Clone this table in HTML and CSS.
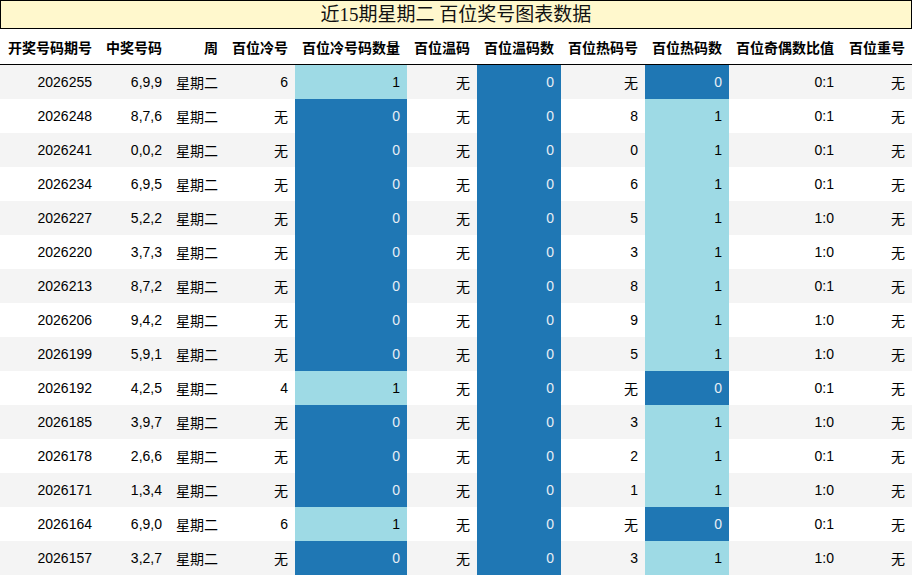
FILE: index.html
```html
<!DOCTYPE html>
<html lang="zh">
<head>
<meta charset="utf-8">
<title>近15期星期二 百位奖号图表数据</title>
<link rel="stylesheet" href="styles.css">
</head>
<body>
<div class="title">近15期星期二 百位奖号图表数据</div>
<table class="data">
<colgroup>
<col class="w99"><col class="w70"><col class="w56"><col class="w70"><col class="w112"><col class="w70"><col class="w84"><col class="w84"><col class="w84"><col class="w112"><col class="w71">
</colgroup>
<thead>
<tr><th>开奖号码期号</th><th>中奖号码</th><th>周</th><th>百位冷号</th><th>百位冷号码数量</th><th>百位温码</th><th>百位温码数</th><th>百位热码号</th><th>百位热码数</th><th>百位奇偶数比值</th><th>百位重号</th></tr>
</thead>
<tbody>
<tr><td>2026255</td><td>6,9,9</td><td>星期二</td><td>6</td><td class="lt">1</td><td>无</td><td class="dk">0</td><td>无</td><td class="dk">0</td><td>0:1</td><td>无</td></tr>
<tr><td>2026248</td><td>8,7,6</td><td>星期二</td><td>无</td><td class="dk">0</td><td>无</td><td class="dk">0</td><td>8</td><td class="lt">1</td><td>0:1</td><td>无</td></tr>
<tr><td>2026241</td><td>0,0,2</td><td>星期二</td><td>无</td><td class="dk">0</td><td>无</td><td class="dk">0</td><td>0</td><td class="lt">1</td><td>0:1</td><td>无</td></tr>
<tr><td>2026234</td><td>6,9,5</td><td>星期二</td><td>无</td><td class="dk">0</td><td>无</td><td class="dk">0</td><td>6</td><td class="lt">1</td><td>0:1</td><td>无</td></tr>
<tr><td>2026227</td><td>5,2,2</td><td>星期二</td><td>无</td><td class="dk">0</td><td>无</td><td class="dk">0</td><td>5</td><td class="lt">1</td><td>1:0</td><td>无</td></tr>
<tr><td>2026220</td><td>3,7,3</td><td>星期二</td><td>无</td><td class="dk">0</td><td>无</td><td class="dk">0</td><td>3</td><td class="lt">1</td><td>1:0</td><td>无</td></tr>
<tr><td>2026213</td><td>8,7,2</td><td>星期二</td><td>无</td><td class="dk">0</td><td>无</td><td class="dk">0</td><td>8</td><td class="lt">1</td><td>0:1</td><td>无</td></tr>
<tr><td>2026206</td><td>9,4,2</td><td>星期二</td><td>无</td><td class="dk">0</td><td>无</td><td class="dk">0</td><td>9</td><td class="lt">1</td><td>1:0</td><td>无</td></tr>
<tr><td>2026199</td><td>5,9,1</td><td>星期二</td><td>无</td><td class="dk">0</td><td>无</td><td class="dk">0</td><td>5</td><td class="lt">1</td><td>1:0</td><td>无</td></tr>
<tr><td>2026192</td><td>4,2,5</td><td>星期二</td><td>4</td><td class="lt">1</td><td>无</td><td class="dk">0</td><td>无</td><td class="dk">0</td><td>0:1</td><td>无</td></tr>
<tr><td>2026185</td><td>3,9,7</td><td>星期二</td><td>无</td><td class="dk">0</td><td>无</td><td class="dk">0</td><td>3</td><td class="lt">1</td><td>1:0</td><td>无</td></tr>
<tr><td>2026178</td><td>2,6,6</td><td>星期二</td><td>无</td><td class="dk">0</td><td>无</td><td class="dk">0</td><td>2</td><td class="lt">1</td><td>0:1</td><td>无</td></tr>
<tr><td>2026171</td><td>1,3,4</td><td>星期二</td><td>无</td><td class="dk">0</td><td>无</td><td class="dk">0</td><td>1</td><td class="lt">1</td><td>1:0</td><td>无</td></tr>
<tr><td>2026164</td><td>6,9,0</td><td>星期二</td><td>6</td><td class="lt">1</td><td>无</td><td class="dk">0</td><td>无</td><td class="dk">0</td><td>0:1</td><td>无</td></tr>
<tr><td>2026157</td><td>3,2,7</td><td>星期二</td><td>无</td><td class="dk">0</td><td>无</td><td class="dk">0</td><td>3</td><td class="lt">1</td><td>1:0</td><td>无</td></tr>
</tbody>
</table>
</body>
</html>
```
FILE: styles.css
```css
html, body {
  margin: 0;
  padding: 0;
  background: #fff;
}
body {
  width: 912px;
  overflow: hidden;
  font-family: "Liberation Sans", "Noto Sans CJK SC", sans-serif;
  color: #000;
}
.title {
  box-sizing: border-box;
  width: 912px;
  height: 29px;
  border: 1px solid #000;
  background: #fff8cd;
  font-family: "Liberation Serif", "Noto Sans CJK SC", serif;
  font-size: 19px;
  line-height: 28px;
  text-align: center;
  color: #111;
}
.data {
  border-collapse: collapse;
  table-layout: fixed;
  width: 912px;
  font-size: 14px;
}
.w99 { width: 99px; }
.w70 { width: 70px; }
.w56 { width: 56px; }
.w112 { width: 112px; }
.w84 { width: 84px; }
.w71 { width: 71px; }
.data th, .data td {
  padding: 0 7px;
  text-align: right;
  white-space: nowrap;
  overflow: hidden;
}
.data th {
  height: 35px;
  font-weight: bold;
  border-bottom: 1px solid #000;
  background: #fff;
}
.data td {
  height: 34px;
}
.data tbody tr:nth-child(odd) td {
  background: #f4f4f4;
}
.data tbody tr:nth-child(even) td {
  background: #fff;
}
.data tbody tr td.lt {
  background: #9edae5;
  color: #000;
}
.data tbody tr td.dk {
  background: #1f77b4;
  color: #e8eef4;
}
```
